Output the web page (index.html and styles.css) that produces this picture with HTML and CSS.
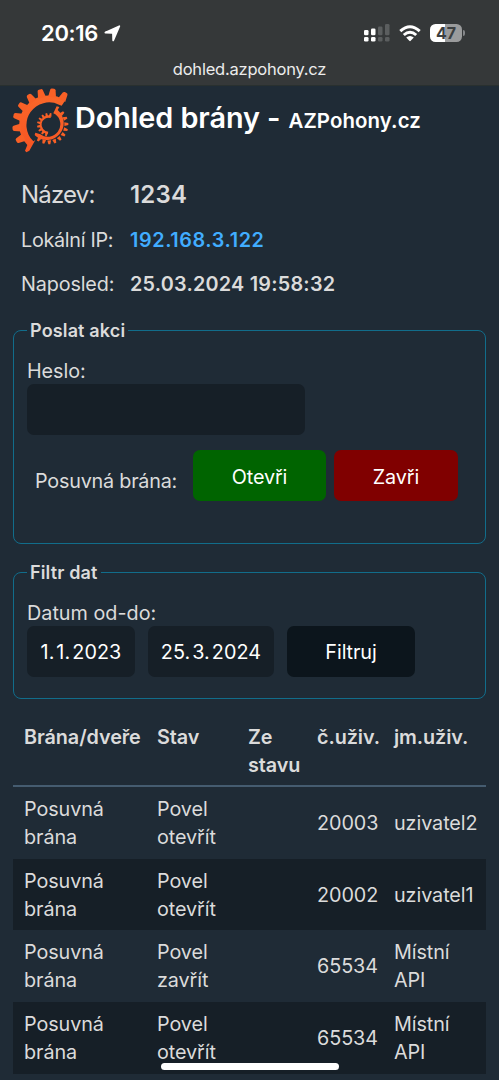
FILE: index.html
```html
<!DOCTYPE html>
<html lang="cs">
<head>
<meta charset="utf-8">
<title>Dohled brány</title>
<link rel="stylesheet" href="styles.css">
</head>
<body>
<header class="browser">
  <div class="status">
    <span class="clock">20:16</span>
    <svg class="locate" viewBox="0 0 17 17"><path d="M15.300 1.200L9.200 15.400L9 8.600Q8.900 7.800 8 7.800L1.400 7.500Z" fill="#fff" stroke="#fff" stroke-width="1.800" stroke-linejoin="round"/></svg>
    <svg class="signal" viewBox="0 0 26 18">
      <g fill="#fff"><rect x="0" y="6" width="4.5" height="5.3" rx="1.3"/><rect x="0" y="13" width="4.5" height="4.5" rx="1.3"/><rect x="7" y="4.5" width="4.5" height="6.8" rx="1.3"/><rect x="7" y="13" width="4.5" height="4.5" rx="1.3"/></g>
      <g fill="#5b5e5f"><rect x="14" y="2.5" width="4.5" height="8.8" rx="1.3"/><rect x="14" y="13" width="4.5" height="4.5" rx="1.3"/><rect x="21" y="0" width="4.5" height="11.3" rx="1.3"/><rect x="21" y="13" width="4.5" height="4.5" rx="1.3"/></g>
    </svg>
    <svg class="wifi" viewBox="0 0 22 17"><g fill="none" stroke="#fff" stroke-width="3"><path d="M1.3 6.2Q11-2.6 20.7 6.2"/><path d="M4.8 10Q11 4.4 17.2 10"/></g><path d="M7.2 12.6Q11 9.4 14.8 12.6L11.7 15.8Q11 16.5 10.3 15.8Z" fill="#fff"/></svg>
    <span class="battery"><span class="level">47</span><i class="cap"></i></span>
  </div>
  <div class="address">dohled.azpohony.cz</div>
</header>
<main class="page">
  <h1 class="title">
    <svg class="logo" viewBox="37 23 171 195">
      <defs>
        <linearGradient id="fire" gradientUnits="userSpaceOnUse" x1="0" y1="25" x2="0" y2="215"><stop offset="0" stop-color="#f9692a"/><stop offset="1" stop-color="#f75423"/></linearGradient>
        <path id="tooth-l" d="M230 121L252 125Q256 126 256 130V136Q256 140 252 141L230 145Z"/>
        <path id="tooth-m" d="M194 127.500L206 130V136L194 138.500Z"/>
        <path id="tooth-s" d="M172 129L182 130.500V135.500L172 137Z"/>
      </defs>
      <g fill="url(#fire)">
        <path d="M187 55A88 88 0 0 0 83 194L76 211L80 216L89 211L107 179L101 183A68 68 0 0 1 178 73L186 76L193 66L201 44L193 40Z"/>
        <path d="M171 78L161 99L167 102A37 37 0 1 1 122 162L107 157L105 164L108 167A51 51 0 1 0 174 89L179 80Z"/>
        <path d="M153 105A28 28 0 1 0 144 161L146 154A21 21 0 1 1 153 113Z"/>
      </g>
      <g fill="#f86026">
        <use href="#tooth-l" transform="rotate(-62 147 133)"/><use href="#tooth-l" transform="rotate(-83 147 133)"/><use href="#tooth-l" transform="rotate(-104 147 133)"/><use href="#tooth-l" transform="rotate(-124 147 133)"/><use href="#tooth-l" transform="rotate(-145 147 133)"/><use href="#tooth-l" transform="rotate(-165 147 133)"/><use href="#tooth-l" transform="rotate(-186 147 133)"/><use href="#tooth-l" transform="rotate(-207 147 133)"/>
        <use href="#tooth-m" transform="rotate(-40 147 133)"/><use href="#tooth-m" transform="rotate(-21 147 133)"/><use href="#tooth-m" transform="rotate(-2 147 133)"/><use href="#tooth-m" transform="rotate(16 147 133)"/><use href="#tooth-m" transform="rotate(34 147 133)"/><use href="#tooth-m" transform="rotate(52 147 133)"/><use href="#tooth-m" transform="rotate(70 147 133)"/><use href="#tooth-m" transform="rotate(88 147 133)"/><use href="#tooth-m" transform="rotate(106 147 133)"/><use href="#tooth-m" transform="rotate(124 147 133)"/>
        <use href="#tooth-s" transform="rotate(-80 147 133)"/><use href="#tooth-s" transform="rotate(-102 147 133)"/><use href="#tooth-s" transform="rotate(-124 147 133)"/><use href="#tooth-s" transform="rotate(-146 147 133)"/><use href="#tooth-s" transform="rotate(-168 147 133)"/><use href="#tooth-s" transform="rotate(-190 147 133)"/><use href="#tooth-s" transform="rotate(-212 147 133)"/><use href="#tooth-s" transform="rotate(-234 147 133)"/><use href="#tooth-s" transform="rotate(-256 147 133)"/>
      </g>
    </svg>
    <span class="name">Dohled brány -</span><span class="brand">AZPohony.cz</span>
  </h1>
  <dl class="info">
    <dt class="big name-label">Název:</dt><dd class="big id">1234</dd>
    <dt class="ip-label">Lokální IP:</dt><dd><a class="ip" href="#">192.168.3.122</a></dd>
    <dt class="seen-label">Naposled:</dt><dd class="seen">25.03.2024 19:58:32</dd>
  </dl>
  <fieldset class="box action">
    <legend>Poslat akci</legend>
    <label class="label" for="pw">Heslo:</label>
    <input class="password" id="pw" type="password">
    <div class="gate">
      <span class="gate-name">Posuvná brána:</span>
      <button class="btn open">Otevři</button>
      <button class="btn close">Zavři</button>
    </div>
  </fieldset>
  <fieldset class="box filter">
    <legend>Filtr dat</legend>
    <span class="label dates-label">Datum od-do:</span>
    <div class="dates">
      <span class="date from">1.&#8202;1.&#8202;2023</span>
      <span class="date to">25.&#8202;3.&#8202;2024</span>
      <button class="btn submit">Filtruj</button>
    </div>
  </fieldset>
  <table class="log">
    <colgroup><col class="c1"><col class="c2"><col class="c3"><col class="c4"><col class="c5"></colgroup>
    <thead><tr><th>Brána/dveře</th><th>Stav</th><th>Ze<br>stavu</th><th>č.uživ.</th><th>jm.uživ.</th></tr></thead>
    <tbody>
      <tr><td>Posuvná<br>brána</td><td>Povel<br>otevřít</td><td></td><td>20003</td><td>uzivatel2</td></tr>
      <tr><td>Posuvná<br>brána</td><td>Povel<br>otevřít</td><td></td><td>20002</td><td>uzivatel1</td></tr>
      <tr><td>Posuvná<br>brána</td><td>Povel<br>zavřít</td><td></td><td>65534</td><td>Místní<br>API</td></tr>
      <tr><td>Posuvná<br>brána</td><td>Povel<br>otevřít</td><td></td><td>65534</td><td>Místní<br>API</td></tr>
    </tbody>
  </table>
</main>
<div class="home"></div>
</body>
</html>
```
FILE: styles.css
```css
* { box-sizing: border-box; }
body {
  margin: 0;
  height: 1080px;
  overflow: hidden;
  background: #1f2b36;
  color: #dbdbdb;
  font: 19.8px/28px Inter, "Liberation Sans", sans-serif;
  letter-spacing: -.08px;
  white-space: nowrap;
}
.browser { height: 86px; background: #353839; border-bottom: 1px solid #29302f; color: #fff; }
.status { display: flex; align-items: center; height: 58px; padding: 8px 34px 0 41px; }
.clock { font-size: 22px; font-weight: 600; letter-spacing: -.3px; }
.locate { width: 17px; height: 17px; margin-left: 6px; }
.signal { width: 26px; height: 18px; margin-left: auto; }
.wifi { width: 22px; height: 17px; margin: 0 9px; }
.battery { display: flex; align-items: center; gap: 1px; }
.level {
  width: 32px; height: 18px; border-radius: 5.5px;
  background: linear-gradient(90deg, #fff 47%, #9a9b9c 47%);
  color: #3c3f40; font-size: 16px; font-weight: 700; line-height: 18px; text-align: center;
}
.cap { width: 2px; height: 6px; border-radius: 0 2px 2px 0; background: #85878a; }
.address { text-align: center; font-size: 16.5px; line-height: 22px; letter-spacing: -.22px; color: #ececec; }
.page { padding: 0 13px; }
.title { display: flex; align-items: flex-start; margin: 0; height: 86px; padding-top: 2px; color: #fff; font-weight: 600; }
.logo { width: 57px; height: 65px; margin: 0 6px 0 -1px; }
.name { font-size: 28.8px; line-height: 60px; letter-spacing: -.05px; }
.brand { font-size: 20.4px; line-height: 66px; margin-left: 8px; letter-spacing: .1px; }
.info { display: grid; grid-template-columns: 109px 1fr; grid-template-rows: 45px 46px 41px; align-items: center; margin: 0 0 0 8px; height: 144px; }
.info dt, .info dd { margin: 0; }
.info dd { font-weight: 600; }
.info .big { font-size: 24px; }
.info .name-label { letter-spacing: -.8px; }
.info .id { letter-spacing: .2px; }
.ip-label { letter-spacing: -.3px; }
.seen-label { letter-spacing: -.15px; }
.seen { letter-spacing: .24px; }
.ip { color: #41adff; text-decoration: none; letter-spacing: .6px; }
.box { margin: 0; padding: 0 13px; border: 1px solid #116d8b; border-radius: 8px; }
.box legend { padding: 2px 3px 0; font-size: 18px; font-weight: 600; line-height: 26px; letter-spacing: .15px; }
.action { height: 228px; }
.filter { height: 141px; margin-top: 14px; }
.label { display: block; margin-top: 12px; height: 28px; line-height: 30px; }
.dates-label { letter-spacing: 0; }
.password { display: block; width: 278px; height: 51px; border: 0; border-radius: 7px; background: #161f27; }
.gate { display: flex; align-items: center; margin-top: 15px; padding-left: 8px; }
.gate-name { width: 158px; padding-top: 10px; letter-spacing: -.22px; }
.btn { height: 51px; padding: 2px 0 0; border: 0; border-radius: 7px; color: #fff; font: inherit; letter-spacing: -.1px; }
.open { width: 133px; background: #006400; }
.close { width: 124px; margin-left: 8px; background: #800000; }
.dates { display: flex; gap: 13px; }
.date { height: 51px; border-radius: 7px; background: #161f27; color: #fff; line-height: 52px; text-align: center; letter-spacing: .1px; }
.from { width: 108px; }
.to { width: 126px; }
.submit { width: 128px; padding-top: 0; background: #0c151c; }
.log { width: 473px; margin-top: 15px; table-layout: fixed; border-collapse: collapse; }
.c1 { width: 133px; } .c2 { width: 91px; } .c3 { width: 69px; } .c4 { width: 77px; } .c5 { width: 103px; }
.log td { padding: 7.850px 0 7.850px 11px; text-align: left; }
.log th { padding: 9px 0 6px 11px; text-align: left; vertical-align: top; font-weight: 600; border-bottom: 2px solid #455c70; }
.log tbody tr:nth-child(even) { background: #161f27; }
.home { position: absolute; left: 161px; top: 1063px; width: 178px; height: 7px; border-radius: 4px; background: #fff; }
```
